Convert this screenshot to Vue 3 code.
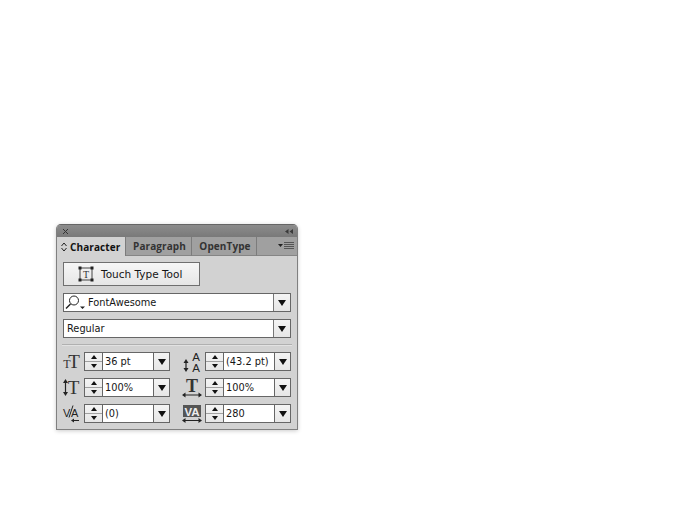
<script setup>
const left = [
  { id: 'size', value: '36 pt' },
  { id: 'vscale', value: '100%' },
  { id: 'kern', value: '(0)' },
]
const right = [
  { id: 'lead', value: '(43.2 pt)' },
  { id: 'hscale', value: '100%' },
  { id: 'track', value: '280' },
]
const rows = left.map((l, i) => ({ l, r: right[i] }))
</script>

<template>
  <div class="page">
    <section class="panel">
      <header class="titlebar">
        <svg width="7" height="7" viewBox="0 0 7 7"><path d="M1 1l5 5M6 1l-5 5" stroke="#333" fill="none"/></svg>
        <svg width="8" height="5" viewBox="0 0 8 5"><path d="M3.500 0v5L0 2.500zM8 0v5L4.500 2.500z" fill="#3a3a3a"/></svg>
      </header>
      <nav class="tabs">
        <div class="tab active">
          <svg width="6" height="10" viewBox="0 0 6 10"><path d="M.5 4L3 1l2.500 3M.5 6L3 9l2.500-3" stroke="#222" fill="none"/></svg>
          <span>Character</span>
        </div>
        <div class="tab para">Paragraph</div>
        <div class="tab open">OpenType</div>
        <div class="tab-rest">
          <svg width="16" height="8" viewBox="0 0 16 8"><path d="M0 2h5L2.500 5z" fill="#222"/><path d="M6 .5h10M6 2.500h10M6 4.500h10M6 6.500h10" stroke="#555"/></svg>
        </div>
      </nav>
      <div class="body">
        <button class="touch" type="button">
          <svg width="16" height="16" viewBox="0 0 16 16">
            <rect x="2" y="2" width="12" height="12" fill="none" stroke="#444"/>
            <g fill="#222"><rect x="0.500" y="0.500" width="3" height="3"/><rect x="12.500" y="0.500" width="3" height="3"/><rect x="0.500" y="12.500" width="3" height="3"/><rect x="12.500" y="12.500" width="3" height="3"/></g>
            <text x="8" y="12" text-anchor="middle" class="svg-serif" font-size="10">T</text>
          </svg>
          <span>Touch Type Tool</span>
        </button>
        <div class="field font">
          <div class="value search">
            <svg width="20" height="15" viewBox="0 0 20 15">
              <circle cx="9" cy="5.500" r="4.500" fill="none" stroke="#222"/>
              <path d="M5.500 9L1 13.500" stroke="#222" stroke-width="1.500"/>
              <path d="M15 11.500h5l-2.500 2.500z" fill="#222"/>
            </svg>
            <span>FontAwesome</span>
          </div>
          <div class="drop"><i class="arrow"></i></div>
        </div>
        <div class="field style">
          <div class="value">Regular</div>
          <div class="drop"><i class="arrow"></i></div>
        </div>
        <div class="sep"></div>
        <div class="grid">
          <template v-for="row in rows" :key="row.l.id">
            <div class="ctl left">
              <div class="icon">
                <svg v-if="row.l.id === 'size'" class="free" width="20" height="18" viewBox="0 0 20 18">
                  <text x="4" y="15" text-anchor="middle" class="svg-serif" font-size="12">T</text>
                  <text x="11" y="15" text-anchor="middle" class="svg-serif" font-size="19">T</text>
                </svg>
                <svg v-else-if="row.l.id === 'vscale'" class="free" width="20" height="18" viewBox="0 0 20 18">
                  <path d="M2.500 2v13" stroke="#222" stroke-width="1.200"/>
                  <path d="M2.500 0L5 4H0zM2.500 17L5 13H0z" fill="#222"/>
                  <text x="10.500" y="15" text-anchor="middle" class="svg-serif" font-size="19">T</text>
                </svg>
                <svg v-else class="free" width="20" height="18" viewBox="0 0 20 18">
                  <text x="0" y="12" class="svg-sans" font-size="11">V</text>
                  <path d="M6 12.500l4-12" stroke="#222"/>
                  <text x="8" y="12" class="svg-sans" font-size="11">A</text>
                  <path d="M9 15.500h7" stroke="#222"/>
                  <path d="M8 15.500l3-2v4z" fill="#222"/>
                </svg>
              </div>
              <div class="spin"><i class="up"></i><i class="down"></i></div>
              <div class="input">{{ row.l.value }}</div>
              <div class="drop"><i class="arrow"></i></div>
            </div>
            <div class="ctl right">
              <div class="icon">
                <svg v-if="row.r.id === 'lead'" class="free" width="20" height="20" viewBox="0 0 20 20">
                  <path d="M4 9v9" stroke="#222" stroke-width="1.200"/>
                  <path d="M4 7l2.500 4h-5zM4 20l2.500-4h-5z" fill="#222"/>
                  <text x="14" y="9" text-anchor="middle" class="svg-sans" font-size="11.500">A</text>
                  <text x="14" y="19.500" text-anchor="middle" class="svg-sans" font-size="11.500">A</text>
                </svg>
                <svg v-else-if="row.r.id === 'hscale'" class="free" width="20" height="18" viewBox="0 0 20 18">
                  <text x="10" y="12.500" text-anchor="middle" class="svg-serif heavy" font-size="18">T</text>
                  <path d="M2 16h16" stroke="#222"/>
                  <path d="M0 16l3.500-2.500v5zM20 16l-3.500-2.500v5z" fill="#222"/>
                </svg>
                <svg v-else class="free" width="20" height="18" viewBox="0 0 20 18">
                  <rect x="1" y="0" width="18" height="12" fill="#555"/>
                  <text x="10" y="10.500" text-anchor="middle" class="svg-sans inv" font-size="11.500">VA</text>
                  <path d="M2 15.500h16" stroke="#222"/>
                  <path d="M0 15.500l3.500-2.500v5zM20 15.500l-3.500-2.500v5z" fill="#222"/>
                </svg>
              </div>
              <div class="spin"><i class="up"></i><i class="down"></i></div>
              <div class="input">{{ row.r.value }}</div>
              <div class="drop"><i class="arrow"></i></div>
            </div>
          </template>
        </div>
      </div>
    </section>
  </div>
</template>

<style>
html, body { margin: 0; background: #fff; }
</style>

<style scoped>
.page {
  width: 700px;
  height: 510px;
  box-sizing: border-box;
  padding: 224px 0 0 56px;
  background: #fff;
  font-family: "DejaVu Sans", "Liberation Sans", sans-serif;
  color: #151515;
}
.panel {
  width: 242px;
  height: 206px;
  box-sizing: border-box;
  border: 1px solid #808080;
  border-top-color: #666;
  border-radius: 5px 5px 0 0;
  background: #d2d2d2;
  box-shadow: 0 1px 4px rgba(0, 0, 0, .2);
  overflow: hidden;
}
.titlebar {
  height: 12px;
  background: linear-gradient(#8c8c8c, #797979);
  display: flex;
  align-items: center;
  justify-content: space-between;
  padding: 0 4px 0 5px;
}
.tabs {
  height: 19px;
  display: flex;
  background: #a0a0a0;
  font-family: "Open Sans", sans-serif;
  font-size: 10px;
  font-weight: 700;
  line-height: 18px;
  letter-spacing: .1px;
  color: #333;
}
.tab {
  box-sizing: border-box;
  border-right: 1px solid #7c7c7c;
  border-bottom: 1px solid #858585;
  text-align: center;
}
.tab.active {
  width: 69px;
  display: flex;
  align-items: center;
  gap: 3px;
  padding-left: 4px;
  background: #d2d2d2;
  border-bottom: 0;
  color: #111;
}
.tab.para { width: 66px; padding-left: 2px; }
.tab.open { width: 65px; padding-left: 2px; }
.tab-rest {
  flex: 1;
  display: flex;
  align-items: center;
  justify-content: flex-end;
  padding-right: 3px;
  border-bottom: 1px solid #858585;
}
.body {
  padding: 6px 6px 0;
}
.touch {
  display: flex;
  align-items: center;
  gap: 7px;
  width: 137px;
  height: 24px;
  box-sizing: border-box;
  padding: 0 0 0 14px;
  border: 1px solid #6f6f6f;
  background: linear-gradient(#f6f6f6, #e6e6e6);
  font-family: inherit;
  font-size: 10.500px;
  color: #151515;
}
.field {
  display: flex;
  width: 228px;
  height: 19px;
  box-sizing: border-box;
  border: 1px solid #666;
  background: #fff;
  font-size: 9.800px;
  line-height: 17px;
}
.font { margin-top: 7px; }
.style { margin-top: 7px; }
.value {
  flex: 1;
  padding-left: 3px;
  border-right: 1px solid #777;
}
.search {
  display: flex;
  align-items: center;
  gap: 3px;
  padding-left: 1px;
}
.drop {
  width: 16px;
  display: flex;
  align-items: center;
  justify-content: center;
  background: linear-gradient(#f4f4f4, #e6e6e6);
}
.arrow {
  width: 0;
  height: 0;
  border-left: 4px solid transparent;
  border-right: 4px solid transparent;
  border-top: 6px solid #111;
}
.sep {
  height: 1px;
  margin: 6px 0 6px -1px;
  width: 230px;
  background: #b0b0b0;
  border-bottom: 1px solid #e2e2e2;
}
.grid {
  display: grid;
  grid-template-columns: 107px 121px;
  row-gap: 7px;
}
.ctl {
  display: flex;
  height: 19px;
  align-items: stretch;
}
.icon {
  display: flex;
  align-items: center;
  justify-content: center;
  margin-right: 1px;
}
.left .icon { width: 20px; }
.right .icon {
  width: 34px;
  justify-content: flex-end;
  padding-right: 2px;
  box-sizing: border-box;
}
.free { overflow: visible; }
.spin {
  width: 18px;
  flex: none;
  box-sizing: border-box;
  border: 1px solid #666;
  border-right: 0;
  background: linear-gradient(#f4f4f4, #e6e6e6);
  display: flex;
  flex-direction: column;
}
.spin i {
  flex: 1;
  display: flex;
  align-items: center;
  justify-content: center;
}
.spin .up { border-bottom: 1px solid #a0a0a0; }
.spin .up::before {
  content: "";
  border-left: 3px solid transparent;
  border-right: 3px solid transparent;
  border-bottom: 4px solid #111;
}
.spin .down::before {
  content: "";
  border-left: 3px solid transparent;
  border-right: 3px solid transparent;
  border-top: 4px solid #111;
}
.input {
  flex: 1;
  box-sizing: border-box;
  border: 1px solid #666;
  background: #fff;
  padding-left: 2px;
  font-size: 9.800px;
  line-height: 17px;
  white-space: nowrap;
}
.left .input { width: 52px; flex: none; }
.ctl .drop {
  flex: none;
  width: 16px;
  box-sizing: border-box;
  border: 1px solid #666;
  border-left: 0;
}
.svg-serif {
  font-family: "Liberation Serif", serif;
  fill: #333;
}
.svg-serif.heavy { font-weight: 700; }
.svg-sans {
  font-family: "Liberation Sans", sans-serif;
  fill: #222;
}
.svg-sans.inv { fill: #eee; font-weight: 700; }
</style>
